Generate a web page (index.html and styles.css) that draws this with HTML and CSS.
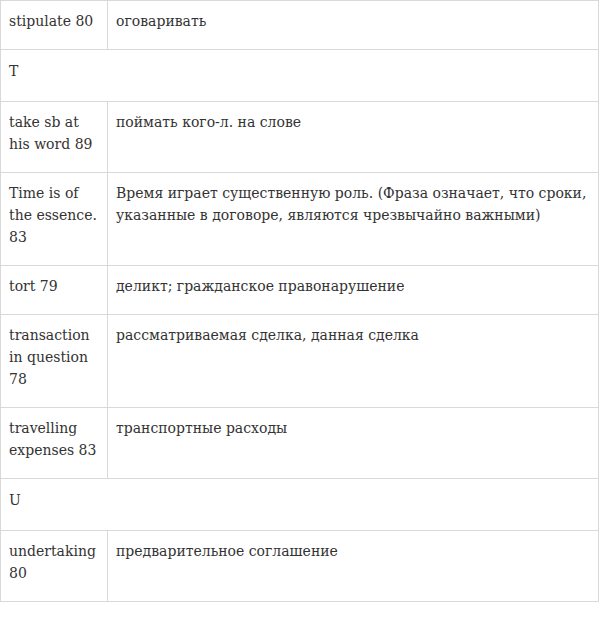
FILE: index.html
```html
<!DOCTYPE html>
<html lang="ru">
<head>
<meta charset="utf-8">
<link rel="stylesheet" href="styles.css">
</head>
<body>
<table class="gloss">
<colgroup><col class="c1"><col class="c2"></colgroup>
<tr><td>stipulate 80</td><td>оговаривать</td></tr>
<tr><td class="letter" colspan="2">T</td></tr>
<tr><td>take sb at his word 89</td><td>поймать кого-л. на слове</td></tr>
<tr><td>Time is of the essence. 83</td><td>Время играет существенную роль. (Фраза означает, что сроки, указанные в договоре, являются чрезвычайно важными)</td></tr>
<tr><td>tort 79</td><td>деликт; гражданское правонарушение</td></tr>
<tr><td>transaction in question 78</td><td>рассматриваемая сделка, данная сделка</td></tr>
<tr><td>travelling expenses 83</td><td>транспортные расходы</td></tr>
<tr><td class="letter" colspan="2">U</td></tr>
<tr><td>undertaking 80</td><td>предварительное соглашение</td></tr>
</table>
</body>
</html>
```
FILE: styles.css
```css
html, body { margin: 0; padding: 0; background: #fff; }
.gloss {
  border-collapse: collapse;
  width: 599px;
  font-family: "DejaVu Serif", "Liberation Serif", serif;
  font-size: 14px;
  line-height: 22px;
  color: #333;
}
.c1 { width: 107px; }
.gloss td {
  border: 1px solid #d9d9d9;
  padding: 9px 8px 17px 8px;
  vertical-align: top;
}
.gloss td.letter {
  padding-top: 10px;
  padding-bottom: 19px;
}
```
